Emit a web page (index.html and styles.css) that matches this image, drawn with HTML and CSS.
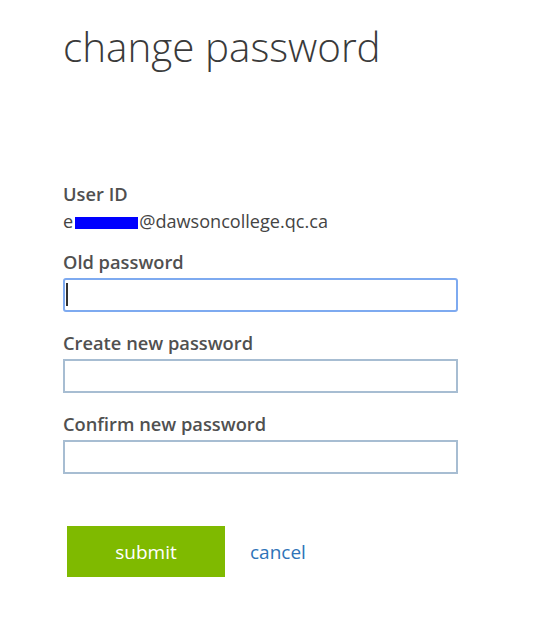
FILE: index.html
```html
<!DOCTYPE html>
<html lang="en">

<head>
    <meta charset="UTF-8">
    <meta name="viewport" content="width=device-width, initial-scale=1.0">
    <title>change password</title>
    <link rel="stylesheet" href="styles.css">
</head>

<body>
    <div class="container">
        <h1>change password</h1>

        <!-- User ID -->
        <div class="field-label">User ID</div>
        <div class="user-id">e<span class="redacted"></span>@dawsoncollege.qc.ca</div>

        <!-- Old password -->
        <label for="old-password">Old password</label>
        <div class="input-wrap">
            <input type="password" id="old-password" class="focused">
            <span class="caret"></span>
        </div>

        <!-- New password -->
        <label for="new-password">Create new password</label>
        <input type="password" id="new-password">

        <!-- Confirm -->
        <label for="confirm-password">Confirm new password</label>
        <input type="password" id="confirm-password">

        <div class="actions">
            <button type="button">submit</button>
            <a href="#" class="cancel">cancel</a>
        </div>
    </div>
</body>

</html>
```

FILE: styles.css
```css
body {
    font-family: "Open Sans", Arial, sans-serif;
    margin: 0;
    background-color: #ffffff;
    color: #444;
}

.container {
    padding: 21px 0 0 63px;
    width: 395px;
}

h1 {
    font-weight: 300;
    font-size: 40.4px;
    color: #3a3a3a;
    margin: 0 0 109px 0;
    line-height: 52px;
}

.field-label,
label {
    display: block;
    font-weight: 600;
    font-size: 18.3px;
    color: #505050;
    line-height: 24px;
}

label {
    margin-bottom: 4px;
}

.user-id {
    font-size: 18.1px;
    color: #444;
    line-height: 22px;
    margin: 4px 0 18px 0;
}

.redacted {
    display: inline-block;
    width: 63px;
    height: 12px;
    margin: 0 1px 0 2px;
    background-color: #0000ff;
    vertical-align: -1px;
}

.input-wrap {
    position: relative;
}

input {
    display: block;
    width: 395px;
    height: 34px;
    margin: 0 0 19px 0;
    box-sizing: border-box;
    border: 2px solid #a7bdd2;
    border-radius: 0;
    outline: none;
    background: #fff;
}

input.focused {
    border-color: #7eaaf0;
    border-radius: 3px;
}

.caret {
    position: absolute;
    left: 3px;
    top: 5px;
    width: 2px;
    height: 23px;
    background-color: #333;
}

.actions {
    display: flex;
    align-items: center;
    margin-top: 52px;
}

button {
    width: 158px;
    height: 51px;
    margin-left: 4px;
    border: none;
    background-color: #7fba00;
    color: #fff;
    font-family: "Open Sans", Arial, sans-serif;
    font-size: 19px;
}

.cancel {
    margin-left: 25px;
    font-size: 19px;
    color: #2e73b8;
    text-decoration: none;
}
```
